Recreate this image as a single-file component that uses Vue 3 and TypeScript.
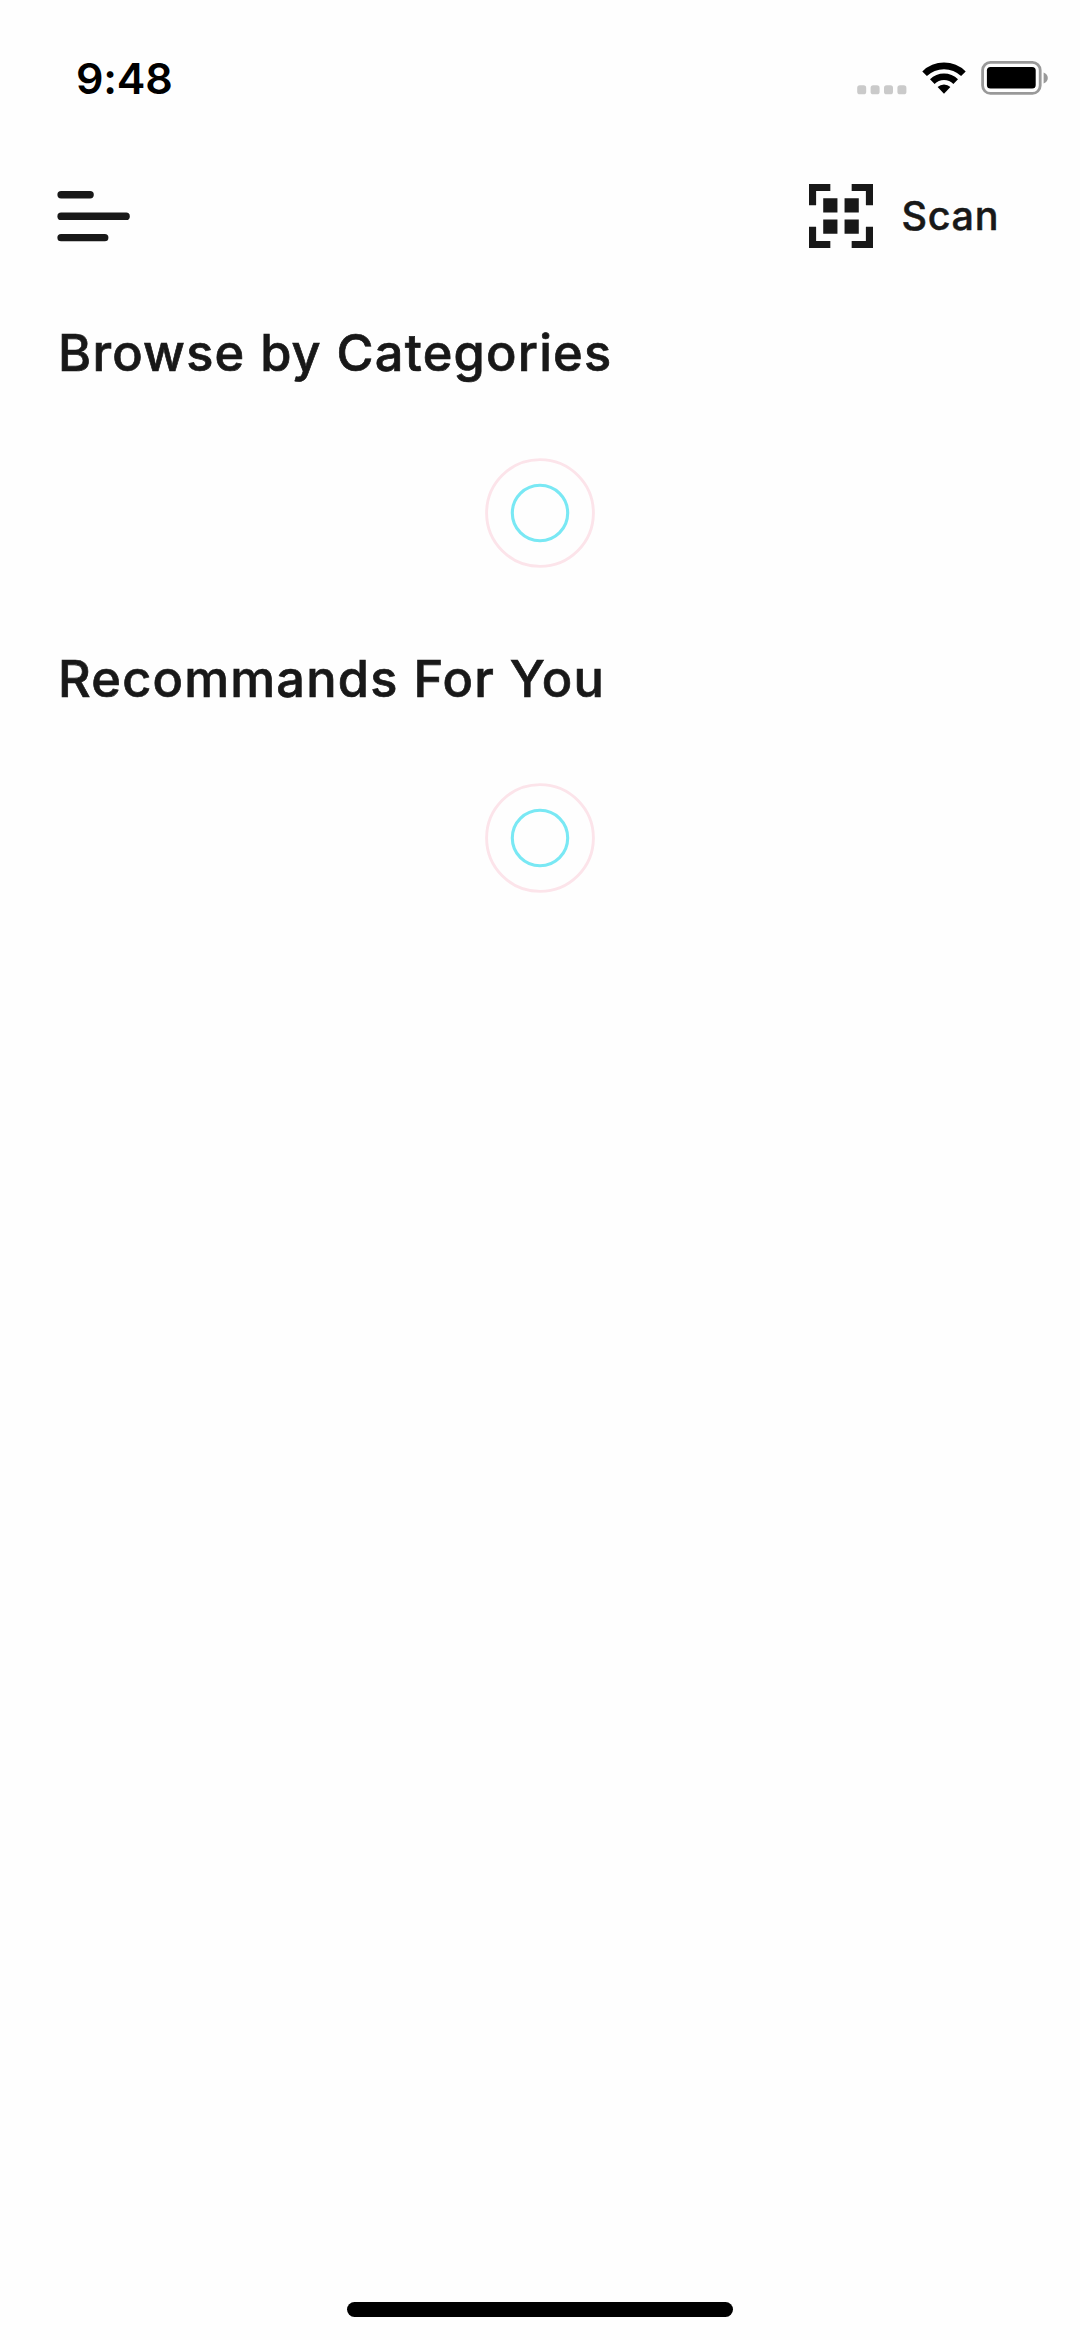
<script setup lang="ts">
interface Section {
  id: string
  title: string
}

const time = '9:48'
const sections: Section[] = [
  { id: 'categories', title: 'Browse by Categories' },
  { id: 'recommended', title: 'Recommands For You' },
]
</script>

<template>
  <div class="screen">
    <div class="status-bar">
      <span class="time">{{ time }}</span>
      <div class="indicators">
        <svg class="signal" width="50" height="10" viewBox="0 0 50 10">
          <rect v-for="n in 4" :key="n" :x="(n - 1) * 13.4 + 0.2" y="0.3" width="9" height="9" rx="2.6" fill="#cacaca" />
        </svg>
        <svg class="wifi" width="44" height="32" viewBox="0 0 44 32">
          <path d="M0.3 9.4 A31 31 0 0 1 43.7 9.4 L39.1 14.1 A24.5 24.5 0 0 0 4.9 14.1 Z" />
          <path d="M8 17.2 A20 20 0 0 1 36 17.2 L31.4 21.9 A13.5 13.5 0 0 0 12.6 21.9 Z" />
          <path d="M15.6 25 A9.2 9.2 0 0 1 28.4 25 L22 31.7 Z" />
        </svg>
        <svg class="battery" width="68" height="34" viewBox="0 0 68 34">
          <rect x="1.6" y="1.4" width="57.6" height="31" rx="7.8" fill="none" stroke="#999" stroke-width="2.8" />
          <rect x="5.9" y="6" width="48.8" height="21.6" rx="3.6" />
          <path d="M62.6 11.6 C65.4 12.6 66.8 14.6 66.8 17 C66.8 19.4 65.4 21.4 62.6 22.4 Z" fill="#999" />
        </svg>
      </div>
    </div>

    <header class="header">
      <svg class="menu" width="74" height="52" viewBox="0 0 74 52">
        <rect x="0.4" y="1" width="36.4" height="7.5" rx="3.7" />
        <rect x="0.4" y="22.6" width="72.4" height="7.5" rx="3.7" />
        <rect x="0.4" y="44" width="51" height="7.3" rx="3.6" />
      </svg>
      <div class="scan">
        <svg width="64" height="64" viewBox="0 0 9 9">
          <path d="M0 0H3V1H1V3H0ZM6 0H9V3H8V1H6ZM0 6H1V8H3V9H0ZM8 6H9V9H6V8H8ZM2 2H4V4H2ZM5 2H7V4H5ZM2 5H4V7H2ZM5 5H7V7H5Z" />
        </svg>
        <span class="scan-label">Scan</span>
      </div>
    </header>

    <main>
      <section v-for="section in sections" :key="section.id" class="section">
        <h2>{{ section.title }}</h2>
        <svg class="loader" width="112" height="112" viewBox="0 0 112 112" fill="none">
          <circle cx="56" cy="56" r="53.4" stroke="#fce4ea" stroke-width="2.9" />
          <circle cx="56" cy="56" r="27.7" stroke="#79e8f4" stroke-width="3.1" />
        </svg>
      </section>
    </main>

    <div class="home-indicator"></div>
  </div>
</template>

<style>
body {
  background: #fefefe;
}
</style>

<style scoped>
.screen {
  display: flex;
  flex-direction: column;
  box-sizing: border-box;
  height: 2340px;
  overflow: hidden;
  padding-bottom: 23px;
  background: #fefefe;
  color: #181818;
  font-family: Inter, sans-serif;
  font-weight: 500;
}

.status-bar {
  display: flex;
  justify-content: space-between;
  box-sizing: border-box;
  height: 158px;
  padding: 53px 31px 0 76px;
  color: #000;
}

.time {
  font-size: 43px;
  font-weight: 600;
  line-height: 50px;
  letter-spacing: -0.2px;
}

.indicators {
  display: flex;
  align-items: flex-start;
  padding-top: 8px;
}

.signal {
  margin: 24px 14.5px 0 0;
}

.wifi {
  margin: 1px 15.5px 0 0;
}

.header {
  display: flex;
  align-items: center;
  justify-content: space-between;
  height: 116px;
  padding: 0 57px;
  fill: #181818;
}

.scan {
  display: flex;
  align-items: center;
  gap: 28.5px;
  width: 214px;
}

.scan-label {
  padding-bottom: 1px;
  font-size: 39.5px;
  line-height: 48px;
  letter-spacing: 0.7px;
  -webkit-text-stroke: 0.5px currentColor;
}

.section {
  display: flex;
  flex-direction: column;
  align-items: center;
  height: 325.6px;
}

h2 {
  align-self: flex-start;
  margin: 49.4px 0 0 58px;
  font-size: 50.5px;
  font-weight: 500;
  line-height: 60px;
  letter-spacing: 1.22px;
  -webkit-text-stroke: 0.7px currentColor;
}

.loader {
  flex-shrink: 0;
  margin-top: 73.4px;
}

.home-indicator {
  width: 386px;
  height: 15px;
  margin: auto auto 0;
  border-radius: 8px;
  background: #000;
}
</style>
